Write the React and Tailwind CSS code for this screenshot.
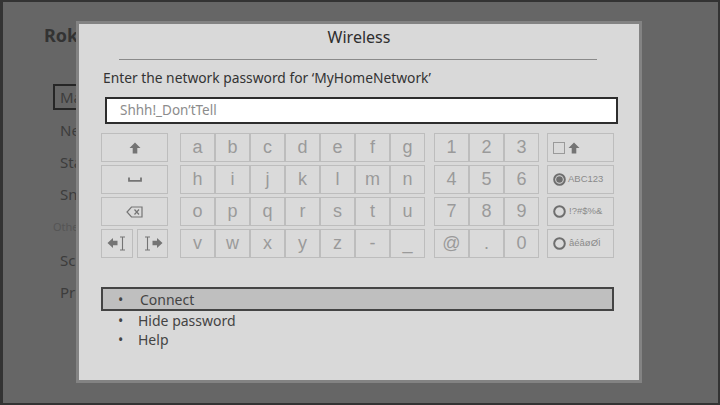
import React from "react";

const ui = { fontFamily: '"Noto Sans", "Open Sans", sans-serif' };
const keyFont = { fontFamily: '"Liberation Sans", Arial, sans-serif' };

const letterRows = [
  ["a", "b", "c", "d", "e", "f", "g"],
  ["h", "i", "j", "k", "l", "m", "n"],
  ["o", "p", "q", "r", "s", "t", "u"],
  ["v", "w", "x", "y", "z", "-", "_"],
];

const numberRows = [
  ["1", "2", "3"],
  ["4", "5", "6"],
  ["7", "8", "9"],
  ["@", ".", "0"],
];

const menu = ["Network", "Standby mode", "Snapshot"];

const ShiftArrow = ({ size = 12 }) => (
  <svg width={size} height={size} viewBox="0 0 12 12">
    <polygon points="6,0.5 11.5,6 8.3,6 8.3,11.5 3.7,11.5 3.7,6 0.5,6" fill="#747474" />
  </svg>
);

const SpaceIcon = () => (
  <svg width="14" height="5" viewBox="0 0 14 5">
    <path d="M1 0.5 V3.8 H13 V0.5" fill="none" stroke="#747474" strokeWidth="1.8" />
  </svg>
);

const BackspaceIcon = () => (
  <svg width="17" height="12" viewBox="0 0 17 12">
    <path d="M5.5 1 H16 V11 H5.5 L1 6 Z" fill="none" stroke="#747474" strokeWidth="1.2" />
    <path d="M8.5 3.5 L13 8.5 M13 3.5 L8.5 8.5" stroke="#747474" strokeWidth="1.2" />
  </svg>
);

const CursorIcon = ({ dir }) => (
  <svg width="21" height="15" viewBox="0 0 21 15" style={dir === "right" ? { transform: "scaleX(-1)" } : undefined}>
    <polygon points="0.5,7 6,2 6,4.8 10.5,4.8 10.5,9.2 6,9.2 6,12" fill="#747474" />
    <path d="M15.5 1 V14 M13 1 H18 M13 14 H18" stroke="#747474" strokeWidth="1.1" fill="none" />
  </svg>
);

const Radio = ({ on }) => (
  <svg width="13" height="13" viewBox="0 0 13 13">
    <circle cx="6.5" cy="6.5" r="5.3" fill="none" stroke="#6e6e6e" strokeWidth="2" />
    {on && <circle cx="6.5" cy="6.5" r="3.3" fill="#6e6e6e" />}
  </svg>
);

const Key = ({ className = "", children }) => (
  <div className={`flex items-center justify-center border border-[#bdbdbd] bg-[#dadada] ${className}`}>
    {children}
  </div>
);

const BackgroundPage = () => (
  <div className="pl-[41px] pt-[21px]" style={ui}>
    <div className="text-[18px] leading-[24px] font-bold text-[#333]">Roku</div>
    <div className="ml-[9px] mt-[37px] w-[150px]">
      <div className="h-[26px] border-2 border-[#262626] pl-[5px] flex items-center text-[15px] text-[#3c3c3c]">
        Main
      </div>
      <div className="mt-[4px]">
        {menu.map((m) => (
          <div key={m} className="h-[32px] pl-[7px] flex items-center text-[15px] text-[#3c3c3c]">
            {m}
          </div>
        ))}
        <div className="h-[34px] flex items-center text-[11px] text-[#555]">Other options</div>
        <div className="h-[32px] pl-[7px] flex items-center text-[15px] text-[#3c3c3c]">Screensaver</div>
        <div className="h-[32px] pl-[7px] flex items-center text-[15px] text-[#3c3c3c]">Privacy</div>
      </div>
    </div>
  </div>
);

export default function App() {
  return (
    <div className="relative w-[720px] h-[405px] overflow-hidden bg-[#666] border-[#333] border-l-[3px] border-t-[2px] border-r-[2px] border-b-[2px]">
      <BackgroundPage />

      <div
        className="absolute left-[73px] top-[19px] w-[566px] h-[362px] bg-[#d9d9d9] border-[3px] border-[#838383]"
        style={ui}
      >
        <div className="pt-[3px] text-center text-[16px] leading-[20px] text-[#2e2e2e]">Wireless</div>
        <div className="ml-[40px] mt-[12px] w-[478px] h-px bg-[#8a8a8a]" />

        <div className="ml-[24px] mt-[9px] text-[13.8px] leading-[18px] text-[#333]">
          Enter the network password for ‘MyHomeNetwork’
        </div>

        <div className="ml-[26px] mt-[10px] w-[513px] h-[27px] bg-white border-2 border-[#2d2d2d] flex items-center pl-[13px] text-[13.5px] text-[#8c8c8c]">
          Shhh!_Don’tTell
        </div>

        <div className="ml-[22px] mt-[9px] flex" style={keyFont}>
          <div className="w-[67px] flex flex-col gap-[3px]">
            <Key className="h-[29px]"><ShiftArrow /></Key>
            <Key className="h-[29px]"><SpaceIcon /></Key>
            <Key className="h-[29px]"><BackspaceIcon /></Key>
            <div className="h-[29px] flex gap-[4px]">
              <Key className="w-[32px]"><CursorIcon dir="left" /></Key>
              <Key className="w-[31px]"><CursorIcon dir="right" /></Key>
            </div>
          </div>

          <div className="ml-[12px] flex flex-col gap-[3px]">
            {letterRows.map((row, i) => (
              <div key={i} className="flex">
                {row.map((c) => (
                  <Key key={c} className="w-[35px] h-[29px] text-[18px] text-[#9a9a9a]">{c}</Key>
                ))}
              </div>
            ))}
          </div>

          <div className="ml-[9px] flex flex-col gap-[3px]">
            {numberRows.map((row, i) => (
              <div key={i} className="flex">
                {row.map((c) => (
                  <Key key={c} className="w-[35px] h-[29px] text-[18px] text-[#9a9a9a]">{c}</Key>
                ))}
              </div>
            ))}
          </div>

          <div className="ml-[8px] w-[67px] flex flex-col gap-[3px]">
            <Key className="h-[29px] justify-start pl-[5px] gap-[3px]">
              <span className="w-[12px] h-[12px] border border-[#9a9a9a]" />
              <ShiftArrow />
            </Key>
            <Key className="h-[29px] justify-start pl-[5px] gap-[2px]">
              <Radio on />
              <span className="text-[9.5px] text-[#8a8a8a]">ABC123</span>
            </Key>
            <Key className="h-[29px] justify-start pl-[5px] gap-[3px]">
              <Radio />
              <span className="text-[9.5px] text-[#8a8a8a]">!?#$%&</span>
            </Key>
            <Key className="h-[29px] justify-start pl-[5px] gap-[3px]">
              <Radio />
              <span className="text-[9.5px] text-[#8a8a8a]">âéâøØÌ</span>
            </Key>
          </div>
        </div>

        <div className="ml-[22px] mt-[29px] w-[513px] text-[14px] text-[#444]">
          <div className="h-[24px] border-2 border-[#444] bg-[#bfbfbf] flex items-center">
            <span className="w-[37px] pl-[15px]">•</span>
            <span>Connect</span>
          </div>
          <div className="h-[19px] flex items-center">
            <span className="w-[37px] pl-[17px]">•</span>
            <span>Hide password</span>
          </div>
          <div className="h-[18px] flex items-center">
            <span className="w-[37px] pl-[17px]">•</span>
            <span>Help</span>
          </div>
        </div>
      </div>
    </div>
  );
}
